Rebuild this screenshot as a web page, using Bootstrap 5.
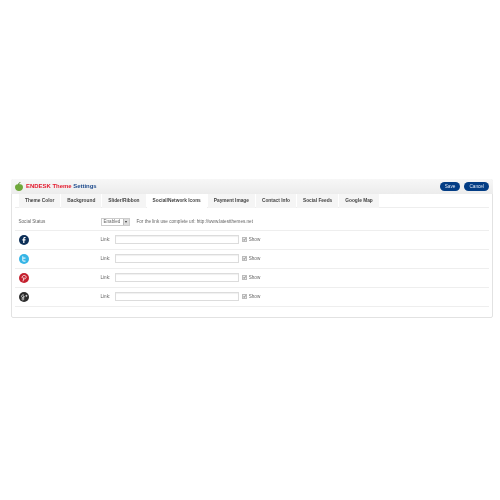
<!DOCTYPE html>
<html lang="en">
<head>
<meta charset="UTF-8">
<meta name="viewport" content="width=device-width, initial-scale=1.0">
<title>Endesk Theme Settings</title>
<link rel="stylesheet" href="https://cdn.jsdelivr.net/npm/bootstrap@5.3.0/dist/css/bootstrap.min.css">
<style>
    body {
        font-family: "Liberation Sans", Arial, sans-serif;
        font-size: 4.6px;
        line-height: 1.2;
        color: #666;
        background: #fff;
    }
    .page-wrap { padding: 179px 7px 0 11px; filter: blur(0.3px); }
    .settings-panel {
        height: 139px;
        border: 1px solid #e2e2e2;
        border-radius: 2px;
    }
    .panel-head {
        height: 15px;
        margin: -1px -1px 0;
        padding: 0 4px 0 4px;
        background: linear-gradient(#f7f7f7, #ececec);
        border-radius: 2px 2px 0 0;
    }
    .head-title { font-size: 5.95px; font-weight: 700; margin-left: 3px; white-space: nowrap; }
    .title-red { color: #e4192c; }
    .title-blue { color: #1d4a8c; }
    .head-btn {
        height: 9px;
        padding: 0 5px;
        font-size: 4.7px;
        line-height: 9px;
        color: #dfe8f5;
        background: #033d85;
        border: 0;
        border-radius: 4.5px;
    }
    .tabs-bar {
        margin: 0 3px 0 3px;
        padding-left: 4px;
        height: 14px;
        border-bottom: 1px solid #eee;
        gap: 1px;
        flex-wrap: nowrap;
    }
    .tab-item {
        height: 14px;
        padding: 0 6px;
        font-size: 4.8px;
        font-weight: 700;
        line-height: 13px;
        color: #444;
        background: #f5f5f5;
        white-space: nowrap;
    }
    .tab-item.is-current { background: #fff; }
    .set-row {
        height: 18.9px;
        margin: 0 3px;
        border-bottom: 1px solid #eee;
    }
    .set-row.first-row { height: 23px; padding-top: 6px; }
    .icon-cell { width: 85.5px; padding-left: 3.5px; }
    .icon-cell svg { display: block; }
    .status-label { width: 85.5px; padding-left: 3.5px; }
    .link-label { margin-right: 4.5px; }
    .link-input {
        width: 124px;
        height: 9px;
        border: 1px solid #dcdcdc;
        background: #fff;
        box-shadow: inset 0 1px 1px #f0f0f0;
    }
    .show-box {
        width: 5px;
        height: 5px;
        margin-left: 3px;
        margin-right: 2px;
        border: 1px solid #bbb;
        background: #ececec;
    }
    .show-box svg { display: block; }
    .select-box {
        width: 29px;
        height: 8px;
        border: 1px solid #ccc;
        padding-left: 2px;
        margin-right: 7px;
        line-height: 6px;
    }
    .select-arrow {
        width: 6px;
        height: 6px;
        margin-left: auto;
        background: #ddd;
        border-left: 1px solid #bbb;
        position: relative;
    }
    .select-arrow::after {
        content: "";
        position: absolute;
        left: 1px;
        top: 2px;
        border-left: 1.5px solid transparent;
        border-right: 1.5px solid transparent;
        border-top: 2px solid #333;
    }
    .hint-text { white-space: nowrap; }
</style>
</head>
<body>
<div class="page-wrap">
    <div class="settings-panel">
        <div class="panel-head d-flex align-items-center">
            <svg width="8" height="9" viewBox="0 0 8 9">
                <path d="M4 2.500c2.200-.8 4 .4 4 2.700S6.300 9 4 9 0 7.500 0 5.200 1.800 1.700 4 2.500z" fill="#6fa83a"/>
                <path d="M3.800 3V1.200L5.500.3" fill="none" stroke="#4f8a26" stroke-width=".9"/>
            </svg>
            <span class="head-title"><span class="title-red">ENDESK Theme</span> <span class="title-blue">Settings</span></span>
            <div class="ms-auto d-flex head-btns">
                <button type="button" class="head-btn me-1">Save</button>
                <button type="button" class="head-btn">Cancel</button>
            </div>
        </div>

        <div class="tabs-bar d-flex">
            <div class="tab-item">Theme Color</div>
            <div class="tab-item">Background</div>
            <div class="tab-item">Slider/Ribbon</div>
            <div class="tab-item is-current">Social/Network Icons</div>
            <div class="tab-item">Payment Image</div>
            <div class="tab-item">Contact Info</div>
            <div class="tab-item">Social Feeds</div>
            <div class="tab-item">Google Map</div>
        </div>

        <div class="set-row first-row d-flex align-items-center">
            <div class="status-label">Social Status</div>
            <div class="select-box d-flex align-items-center">Enabled<span class="select-arrow"></span></div>
            <div class="hint-text">For the link use complete url: http://www.latestthemes.net</div>
        </div>

        <div class="set-row d-flex align-items-center">
            <div class="icon-cell">
                <svg width="10" height="10" viewBox="0 0 10 10"><circle cx="5" cy="5" r="5" fill="#0d2f57"/><path d="M5.400 8V5.400h1l.2-1.100H5.400v-.7c0-.4.2-.6.600-.6h.6V2h-.9C4.700 2 4.200 2.600 4.200 3.500v.8h-.8v1.100h.8V8z" fill="#fff"/></svg>
            </div>
            <span class="link-label">Link:</span>
            <div class="link-input"></div>
            <div class="show-box"><svg width="3" height="3" viewBox="0 0 3 3"><path d="M.3 1.500l.9.9L2.700.4" fill="none" stroke="#555" stroke-width=".7"/></svg></div>
            <span>Show</span>
        </div>

        <div class="set-row d-flex align-items-center">
            <div class="icon-cell">
                <svg width="10" height="10" viewBox="0 0 10 10"><circle cx="5" cy="5" r="5" fill="#36b5e6"/><path d="M3.200 2.300h1.100v1.300h2.200v1.100H4.300v1c0 .6.300.9.900.9h1.300v1.100H4.900C3.800 7.700 3.200 7 3.200 6z" fill="#d8f2fb"/></svg>
            </div>
            <span class="link-label">Link:</span>
            <div class="link-input"></div>
            <div class="show-box"><svg width="3" height="3" viewBox="0 0 3 3"><path d="M.3 1.500l.9.9L2.700.4" fill="none" stroke="#555" stroke-width=".7"/></svg></div>
            <span>Show</span>
        </div>

        <div class="set-row d-flex align-items-center">
            <div class="icon-cell">
                <svg width="10" height="10" viewBox="0 0 10 10"><circle cx="5" cy="5" r="5" fill="#c4202e"/><path d="M4 8.300l1-4M3.200 5.200C2.700 3.500 3.900 2.400 5.200 2.400c1.300 0 2.100.9 1.900 2.100-.2 1.200-1.200 1.800-2.400 1.200" fill="none" stroke="#fbe4e6" stroke-width=".9"/></svg>
            </div>
            <span class="link-label">Link:</span>
            <div class="link-input"></div>
            <div class="show-box"><svg width="3" height="3" viewBox="0 0 3 3"><path d="M.3 1.500l.9.9L2.700.4" fill="none" stroke="#555" stroke-width=".7"/></svg></div>
            <span>Show</span>
        </div>

        <div class="set-row d-flex align-items-center">
            <div class="icon-cell">
                <svg width="10" height="10" viewBox="0 0 10 10"><circle cx="5" cy="5" r="5" fill="#2b2b2b"/><path d="M5 3.200A1.500 1.500 0 1 0 5 5.500c.3-.4.300-.8.300-1.100H3.900M6.400 3.800h2M7.400 2.800v2" fill="none" stroke="#e4e4e4" stroke-width=".8"/><circle cx="3.900" cy="7" r="1" fill="none" stroke="#e4e4e4" stroke-width=".7"/></svg>
            </div>
            <span class="link-label">Link:</span>
            <div class="link-input"></div>
            <div class="show-box"><svg width="3" height="3" viewBox="0 0 3 3"><path d="M.3 1.500l.9.9L2.700.4" fill="none" stroke="#555" stroke-width=".7"/></svg></div>
            <span>Show</span>
        </div>
    </div>
</div>
<script src="https://cdn.jsdelivr.net/npm/bootstrap@5.3.0/dist/js/bootstrap.bundle.min.js"></script>
</body>
</html>
